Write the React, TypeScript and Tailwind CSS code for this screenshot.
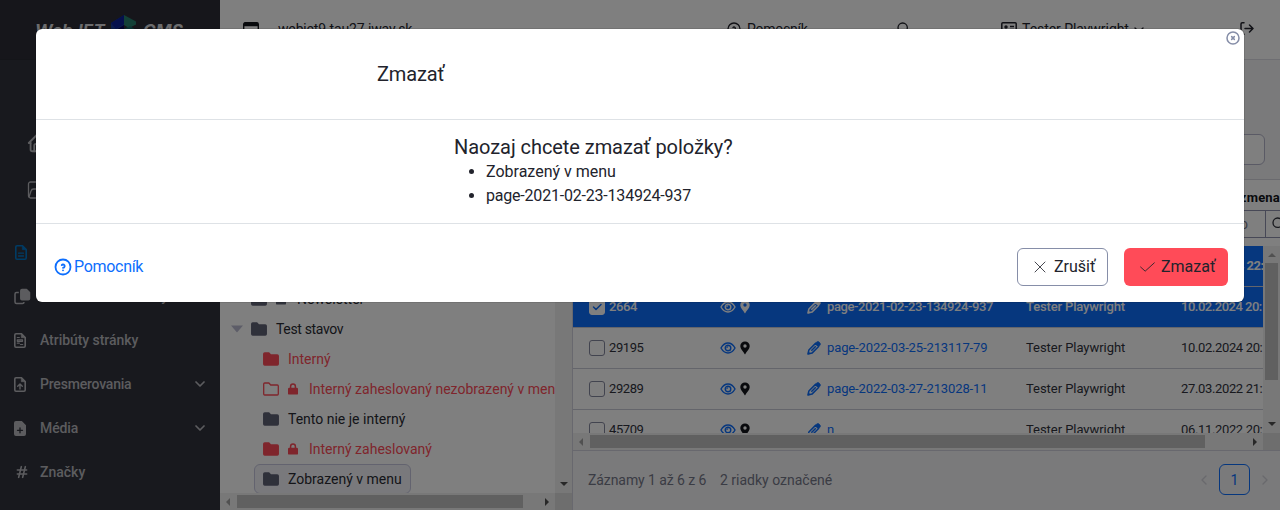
import React from "react";
import { TbHelpCircle, TbSearch, TbChevronDown, TbChevronLeft, TbChevronRight, TbHash, TbX, TbCheck, TbHome, TbCircleX } from "react-icons/tb";

type P = { className?: string };

const Folder = ({ className = "", open = false }: P & { open?: boolean }) => (
  <svg viewBox="0 0 16 14" className={"h-[14px] w-4 shrink-0 " + className} fill={open ? "none" : "currentColor"} stroke="currentColor" strokeWidth="1.3" strokeLinejoin="round">
    <path d="M1.7 1h4.2l1.8 2h6.6q1 0 1 1v8q0 1-1 1H1.7q-1 0-1-1V2q0-1 1-1z" />
  </svg>
);
const Lock = ({ className = "" }: P) => (
  <svg viewBox="0 0 10 12" className={"h-3 w-[10px] shrink-0 " + className} fill="none" stroke="currentColor">
    <path d="M2.6 5.5V3.4a2.4 2.4 0 0 1 4.8 0v2.1" strokeWidth="1.5" />
    <rect x="0" y="4.8" width="10" height="6.8" rx="1.2" fill="currentColor" stroke="none" />
  </svg>
);
const Eye = () => (
  <svg viewBox="0 0 16 12" className="h-3 w-4 shrink-0" fill="none" stroke="currentColor" strokeWidth="1.4">
    <path d="M1 6q2.8-5 7-5t7 5q-2.8 5-7 5T1 6z" />
    <circle cx="8" cy="6" r="2.8" />
    <path d="M6.7 6.2A1.5 1.5 0 0 1 8.2 4.7" strokeWidth="1" />
  </svg>
);
const Pin = ({ className = "" }: P) => (
  <svg viewBox="0 0 10 14" className={"h-[14px] w-[10px] shrink-0 " + className} fill="currentColor" fillRule="evenodd">
    <path d="M5 .4A4.6 4.6 0 0 0 .3 5C.3 8 3.4 10.500 5 13.600 6.600 10.500 9.700 8 9.700 5A4.600 4.600 0 0 0 5 .4zm0 2.900a1.700 1.700 0 1 1 0 3.400 1.700 1.700 0 0 1 0-3.400z" />
  </svg>
);
const Pencil = () => (
  <svg viewBox="0 0 14 14" className="h-[14px] w-[14px] shrink-0" fill="none" stroke="currentColor" strokeLinejoin="round">
    <path d="M1 13l.9-4L8.500 2.400l3.100 3.100L5 12.100z" strokeWidth="1.500" />
    <path d="M8.300 2.300L10 .9q1.100-.8 2.100.2l.8.9q1 1 .1 2.100l-1.500 1.600z" fill="currentColor" strokeWidth=".8" />
    <path d="M4.300 9.700l4.500-4.500" strokeWidth="1.500" />
    <path d="M1 13l.5-2.200 1.700 1.700z" fill="currentColor" strokeWidth=".5" />
  </svg>
);
const FileIcon = ({ kind }: { kind: "text" | "desc" | "up" | "plus" }) => (
  <svg viewBox="0 0 12 15" className="h-[15px] w-3 shrink-0" fill="none" stroke="currentColor" strokeWidth="1.600" strokeLinejoin="round" strokeLinecap="round">
    <path d="M2 .8h5.500L11.200 4.500V13q0 1.200-1.200 1.200H2Q.8 14.200.8 13V2Q.8.8 2 .8z" fill={kind === "plus" ? "currentColor" : "none"} />
    <path d="M7.300.8v3.900h3.900z" fill="currentColor" strokeWidth=".6" />
    {kind === "text" && <path d="M3.500 8.200h5M3.500 11h5" strokeWidth="1.300" />}
    {kind === "desc" && <path d="M3.300 4.500h2M3.300 6.800h5.200v1.500H3.300zM3.300 10.200h2M6.500 11.500h2.200" strokeWidth="1.200" />}
    {kind === "up" && <path d="M6 12V7.500M3.700 9.300L6 7l2.300 2.300" strokeWidth="1.400" />}
    {kind === "plus" && <path d="M6 6.800v5M3.500 9.300h5" stroke="#30323c" strokeWidth="1.300" />}
  </svg>
);

const MenuItem = ({ icon, label, arrow, className = "" }: { icon: React.ReactNode; label: string; arrow?: boolean; className?: string }) => (
  <div className="flex h-11 items-center pl-[14px] pr-[12px] text-[#b8b9be]">
    <span className="flex w-[26px] items-center">{icon}</span>
    <span className={"flex-1 whitespace-nowrap text-sm font-medium " + className}>{label}</span>
    {arrow && <TbChevronDown className="h-4 w-4" strokeWidth={2.600} />}
  </div>
);

const Sidebar = () => (
  <aside className="flex w-[220px] shrink-0 flex-col bg-[#30323c]">
    <div className="flex h-[60px] shrink-0 items-start border-b border-[#292b33] bg-[#2c2d36] pl-[35px] pt-[14px] text-[#d9d9dc]">
      <span className="mt-[5px] w-[76px] font-['Inter'] text-[17px] leading-6 font-bold italic tracking-[0.1px]">WebJET</span>
      <svg viewBox="0 0 26 29" className="mt-[1px] h-[29px] w-[26px]">
        <path d="M0 8L13 0v16L0 24z" fill="#173a98" />
        <path d="M0 8L13 0v9L5 14z" fill="#0b2099" />
        <path d="M13 0l12 6.500v3L18 13l-5-3z" fill="#26816f" />
        <path d="M13 10l-8 5 8 6z" fill="#02045c" />
        <path d="M13 14l6-3 6 4v6l-12 7z" fill="#176668" />
      </svg>
      <span className="ml-[6px] mt-[5px] font-['Inter'] text-[17px] leading-6 font-bold italic tracking-[0.2px]">CMS</span>
    </div>
    <div className="flex h-[170px] shrink-0 flex-col gap-[28px] pl-[27px] pt-[73px] text-[#b8b9be]">
      <TbHome className="h-5 w-5 scale-110" />
      <svg viewBox="0 0 18 18" className="h-[18px] w-[18px]" fill="none" stroke="currentColor" strokeWidth="1.300">
        <rect x="1.500" y="1" width="15" height="16" rx="2" />
        <path d="M2 16l2-6q.6-2 2.500-2H16" />
      </svg>
    </div>
    <nav className="flex flex-col">
      <div className="flex h-11 items-center pl-[15px] text-[#0076c8]"><FileIcon kind="text" /></div>
      <MenuItem icon={
        <svg viewBox="0 0 17 17" className="h-[17px] w-[17px]" fill="none" stroke="currentColor" strokeWidth="1.500" strokeLinejoin="round">
          <path d="M4.800 4.500H2.500q-1.500 0-1.500 1.500v8q0 1.500 1.500 1.500h6q1.500 0 1.500-1.500" />
          <path d="M8 1.500h4.500L15.500 4.500v6q0 1.200-1.200 1.200H8q-1.200 0-1.200-1.200V2.700q0-1.200 1.200-1.200z" fill="currentColor" />
        </svg>} label="Klonovanie štruktúry" className="tracking-[-0.050px]" />
      <MenuItem icon={<FileIcon kind="desc" />} label="Atribúty stránky" className="tracking-[-0.050px]" />
      <MenuItem icon={<FileIcon kind="up" />} label="Presmerovania" arrow className="tracking-[-0.200px]" />
      <MenuItem icon={<FileIcon kind="plus" />} label="Média" arrow className="tracking-[-0.100px]" />
      <MenuItem icon={<TbHash className="h-4 w-4" strokeWidth={2.400} />} label="Značky" />
    </nav>
  </aside>
);

const Header = () => (
  <header className="flex h-[60px] shrink-0 items-start border-b border-[#dcdce4] bg-white pt-[18px] text-sm leading-[22px] text-[#22232c]">
    <svg viewBox="0 0 16 14" className="ml-[23px] mt-1 h-[14px] w-4" fill="none" stroke="#13151b" strokeWidth="1.400">
      <rect x=".7" y=".7" width="14.600" height="12.600" rx="1.500" />
      <path d="M1 2.500h14" strokeWidth="3.500" />
    </svg>
    <span className="ml-[19px] w-[448px] tracking-[-0.150px]">webjet9.tau27.iway.sk</span>
    <TbHelpCircle className="mt-[3px] h-4 w-4" />
    <span className="ml-[5px] w-[149px] tracking-[-0.250px]">Pomocník</span>
    <TbSearch className="mt-[3px] h-4 w-4" />
    <svg viewBox="0 0 16 13" className="ml-[89px] mt-1 h-[13px] w-4" fill="none" stroke="currentColor" strokeWidth="1.500">
      <rect x=".8" y=".8" width="14.400" height="11.400" rx="1" />
      <circle cx="5" cy="5" r="1" fill="currentColor" />
      <path d="M9 4.500h4M9 7.500h4M3 9.500h4" />
    </svg>
    <span className="ml-[5px] w-[109px] whitespace-nowrap tracking-[-0.050px]">Tester Playwright</span>
    <TbChevronDown className="mt-1 h-4 w-4" />
    <svg viewBox="0 0 14 13" className="ml-[93px] mt-1 h-[13px] w-[14px]" fill="none" stroke="currentColor" strokeWidth="1.500" strokeLinecap="round" strokeLinejoin="round">
      <path d="M4 .8H2.200Q1 .8 1 2v9q0 1.200 1.200 1.200H4M5 6.500h8M9.500 3L13 6.500 9.500 10" />
    </svg>
  </header>
);

const Arrow = ({ dir, className = "" }: { dir: "left" | "right" | "up" | "down"; className?: string }) => (
  <span className={"flex h-[17px] w-[17px] shrink-0 items-center justify-center " + className}>
    <svg viewBox="0 0 8 8" className="h-2 w-2" fill="currentColor">
      {dir === "left" && <path d="M5 0v8L1 4z" />}
      {dir === "right" && <path d="M2 0v8L6 4z" />}
      {dir === "up" && <path d="M0 6h8L4 2z" />}
      {dir === "down" && <path d="M0 1h8L4 5z" />}
    </svg>
  </span>
);

const TreeRow = ({ children, label, className = "" }: { children: React.ReactNode; label: string; className?: string }) => (
  <div className={"flex h-[30px] shrink-0 items-center whitespace-nowrap pl-[43px] text-sm " + className}>
    {children}
    <span className="ml-[9px]">{label}</span>
  </div>
);

const Tree = () => (
  <section className="flex w-[353px] shrink-0 flex-col border-r border-[#d0d1dc] bg-white">
    <div className="flex h-[433px] bg-white">
      <div className="flex w-[335px] flex-col overflow-hidden pt-[224px] text-[#2a2b33]">
        <div className="flex h-[30px] shrink-0 items-center pl-[31px] text-sm">
          <Folder className="text-[#5f6275]" />
          <Lock className="ml-[9px] text-[#5f6275]" />
          <span className="ml-[11px]">Newsletter</span>
        </div>
        <div className="flex h-[30px] shrink-0 items-center pl-[11px] text-sm">
          <svg viewBox="0 0 12 8" className="mr-2 h-2 w-3" fill="#babbd0"><path d="M0 .5h12L6 7.500z" /></svg>
          <Folder className="text-[#5f6275]" />
          <span className="ml-[9px] tracking-[-0.350px]">Test stavov</span>
        </div>
        <TreeRow label="Interný" className="text-[#ff4b58]"><Folder /></TreeRow>
        <TreeRow label="Interný zaheslovaný nezobrazený v menu" className="text-[#ff4b58]"><Folder open /><Lock className="ml-[9px] mr-[2px]" /></TreeRow>
        <TreeRow label="Tento nie je interný"><Folder className="text-[#5f6275]" /></TreeRow>
        <TreeRow label="Interný zaheslovaný" className="text-[#ff4b58]"><Folder /><Lock className="ml-[9px] mr-[2px]" /></TreeRow>
        <div className="ml-[34px] flex h-[30px] w-[157px] shrink-0 items-center rounded-md border border-[#c6c7df] bg-[#f3f3f8] pl-2 text-sm">
          <Folder className="text-[#5f6275]" />
          <span className="ml-[9px]">Zobrazený v menu</span>
        </div>
      </div>
      <div className="flex w-[17px] flex-col justify-end bg-[#f1f1f1] text-[#505050]"><Arrow dir="down" /></div>
    </div>
    <div className="flex h-[17px] items-center bg-[#f1f1f1]">
      <Arrow dir="left" className="text-[#a3a3a3]" />
      <div className="h-[13px] w-[286px] bg-[#c1c1c1]" />
      <Arrow dir="right" className="ml-auto text-[#505050]" />
      <div className="h-full w-[17px] bg-[#dcdcdc]" />
    </div>
  </section>
);

const rows = [
  { id: "2663", name: "Zobrazený v menu", date: "10.02.2024 22:", sel: true, bold: true },
  { id: "2664", name: "page-2021-02-23-134924-937", date: "10.02.2024 20:", sel: true },
  { id: "29195", name: "page-2022-03-25-213117-79", date: "10.02.2024 20:" },
  { id: "29289", name: "page-2022-03-27-213028-11", date: "27.03.2022 21:" },
  { id: "45709", name: "n", date: "06.11.2022 20:" },
];

const Table = () => (
  <main className="flex min-w-0 flex-1 flex-col bg-[#f4f4f6]">
    <div className="flex h-[120px] shrink-0 items-start justify-end border-b border-[#d5d5dd] pr-[15px] pt-[74px]">
      <div className="h-[31px] w-[200px] rounded-md border border-[#b4b5ca] bg-white" />
    </div>
    <div className="flex h-[30px] shrink-0 items-center justify-end overflow-hidden whitespace-nowrap bg-white pt-[6px] text-[13px] font-bold tracking-[0.200px] text-[#13151b]">
      Posledná zmena
    </div>
    <div className="flex h-[28px] shrink-0 border-y border-[#8e90ac] bg-white text-sm text-[#77798a]">
      <span className="flex w-[693px] shrink-0 items-center justify-end border-r border-[#8e90ac] pr-[17px]">Do</span>
      <span className="flex items-center overflow-hidden pl-[5px]"><TbSearch className="h-4 w-4 shrink-0 text-[#30323c]" /></span>
    </div>
    <div className="h-[8px] shrink-0 bg-white" />
    <div className="flex h-[187px] shrink-0">
      <div className="flex w-[690px] flex-col overflow-hidden bg-white">
        {rows.map((r) => (
          <div key={r.id} className={"flex h-[41px] shrink-0 items-center overflow-hidden whitespace-nowrap border-b border-[#c9cad6] pl-4 text-[13px] " + (r.sel ? "bg-[#0d6efd] text-white " : "text-[#30323c] ") + (r.bold ? "font-bold" : r.sel ? "font-medium" : "")}>
            <span className={"flex h-4 w-4 shrink-0 items-center justify-center rounded-[3px] border " + (r.sel ? "border-white bg-white text-[#0d6efd]" : "border-[#85889f]")}>
              {r.sel && <TbCheck className="h-3 w-3" strokeWidth={3} />}
            </span>
            <span className="ml-[4px] w-[111px] shrink-0 tracking-[-0.400px]">{r.id}</span>
            <span className={"flex w-[87px] shrink-0 items-center gap-[4px] " + (r.sel ? "" : "text-[#0d6efd]")}>
              <Eye />
              <Pin className={r.sel ? "" : "text-[#13151b]"} />
            </span>
            <span className={"flex w-[219px] shrink-0 items-center gap-[6px] " + (r.sel ? "" : "text-[#0d6efd]")}>
              <Pencil />
              <span className={r.sel ? "tracking-[-0.400px]" : "tracking-[-0.120px]"}>{r.name}</span>
            </span>
            <span className={"w-[155px] shrink-0 " + (r.sel ? "tracking-[-0.150px]" : "tracking-[-0.050px]")}>Tester Playwright</span>
            <span className={r.bold ? "tracking-[-0.450px]" : r.sel ? "tracking-[-0.500px]" : "tracking-[-0.350px]"}>{r.date}</span>
          </div>
        ))}
      </div>
      <div className="flex w-[17px] flex-col items-center bg-[#f1f1f1] text-[#505050]">
        <Arrow dir="up" className="text-[#a3a3a3]" />
        <div className="h-[117px] w-[13px] bg-[#c1c1c1]" />
        <Arrow dir="down" className="mt-auto" />
      </div>
    </div>
    <div className="flex h-[17px] shrink-0 items-center bg-[#f1f1f1]">
      <Arrow dir="left" className="text-[#a3a3a3]" />
      <div className="h-[13px] w-[615px] bg-[#c1c1c1]" />
      <Arrow dir="right" className="ml-auto text-[#505050]" />
      <div className="h-full w-[17px] bg-[#dcdcdc]" />
    </div>
    <footer className="flex h-[60px] shrink-0 items-center border-t border-[#d0d1dc] pb-[2px] pl-[15px] text-sm text-[#757889]">
      <span className="w-[132px] tracking-[-0.080px]">Záznamy 1 až 6 z 6</span>
      <span>2 riadky označené</span>
      <span className="ml-auto flex items-center text-[#d2d2da]">
        <TbChevronLeft className="mr-[7px] h-4 w-4" />
        <span className="flex h-[31px] w-[31px] items-center justify-center rounded-md border border-[#0d6efd] text-[#0d6efd]">1</span>
        <TbChevronRight className="ml-[7px] mr-[7px] h-4 w-4" />
      </span>
    </footer>
  </main>
);

const Dialog = () => (
  <div className="absolute inset-0 bg-black/50 px-9 pt-[29px]">
    <div role="dialog" className="relative flex h-[273px] w-[1208px] flex-col rounded-md bg-white text-[#22232c] shadow-[0_0_1px_#000]">
      <TbCircleX className="absolute right-[3px] top-[1px] h-4 w-4 text-[#868ea8]" strokeWidth={2.300} />
      <div className="flex h-[91px] shrink-0 items-center border-b border-[#dee2e6] pl-[341px] text-xl"><h5 className="tracking-[-0.150px]">Zmazať</h5></div>
      <div className="flex h-[104px] shrink-0 flex-col border-b border-[#dee2e6] pl-[418px] pt-[15px]">
        <h5 className="text-xl leading-6 tracking-[-0.060px]">Naozaj chcete zmazať položky?</h5>
        <ul className="mt-px list-disc pl-8 text-base leading-6">
          <li>Zobrazený v menu</li>
          <li className="tracking-[-0.200px]">page-2021-02-23-134924-937</li>
        </ul>
      </div>
      <div className="flex flex-1 items-center pl-[17px] pr-4 pt-[8px]">
        <a className="flex items-center text-base tracking-[-0.300px] text-[#0d6efd]"><TbHelpCircle className="h-5 w-5" strokeWidth={2.200} /><span className="ml-px">Pomocník</span></a>
        <button className="ml-auto flex h-[38px] w-[91px] items-center rounded-md border border-[#868ea8] pl-[12px] text-base"><TbX className="mr-[4px] h-5 w-5" strokeWidth={1} />Zrušiť</button>
        <button className="ml-4 flex h-[38px] w-[104px] items-center rounded-md bg-[#ff4b58] pl-[13px] text-base"><TbCheck className="mr-[4px] h-5 w-5 scale-x-110" strokeWidth={1} />Zmazať</button>
      </div>
    </div>
  </div>
);

export default function App() {
  return (
    <div className="relative flex h-[510px] w-[1280px] overflow-hidden font-['Roboto','Noto_Sans',sans-serif]">
      <Sidebar />
      <div className="flex min-w-0 flex-1 flex-col">
        <Header />
        <div className="flex min-h-0 flex-1">
          <Tree />
          <Table />
        </div>
      </div>
      <Dialog />
    </div>
  );
}
